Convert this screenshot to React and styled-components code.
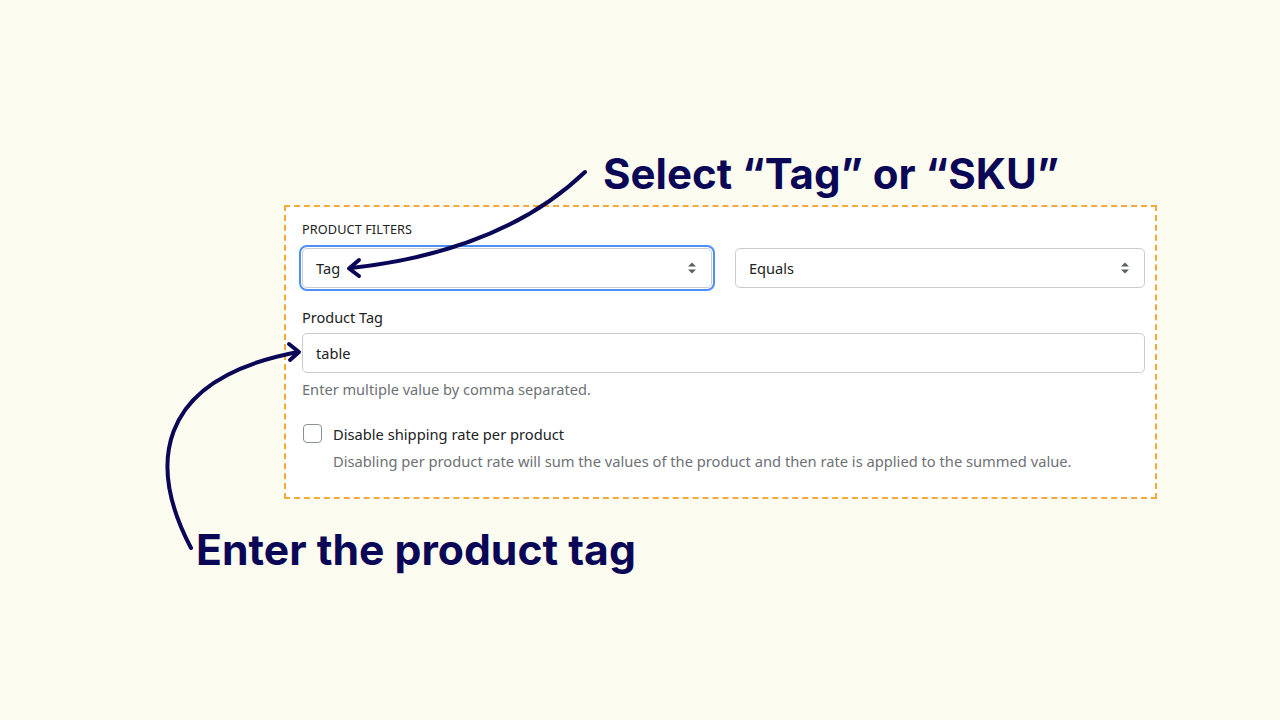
import React from "react";
import styled, { createGlobalStyle } from "styled-components";

const Global = createGlobalStyle`
  html, body { margin: 0; padding: 0; background: #fcfbef; }
  body { font-family: "Noto Sans", "Open Sans", sans-serif; }
  * { box-sizing: border-box; }
`;

const NAVY = "#0b0757";

const Stage = styled.div`
  position: relative;
  width: 1280px;
  height: 720px;
  overflow: hidden;
  background: #fcfbef;
  display: flex;
  flex-direction: column;
  align-items: flex-start;
`;

const Callout = styled.div`
  font-family: Inter, "Open Sans", sans-serif;
  font-weight: 700;
  font-size: ${(p) => p.$size}px;
  line-height: 48px;
  color: ${NAVY};
  white-space: nowrap;
  padding-left: ${(p) => p.$left}px;
  margin-top: ${(p) => p.$top}px;
`;

const Panel = styled.section`
  margin-top: 7px;
  margin-left: 284px;
  width: 873px;
  background: #fff;
  border: 2px dashed #f5a93c;
  padding: 12px 10px 26px 16px;
  display: flex;
  flex-direction: column;
`;

const SectionTitle = styled.div`
  font-size: 12.7px;
  line-height: 20px;
  text-transform: uppercase;
  color: #202223;
  letter-spacing: 0.1px;
`;

const SelectRow = styled.div`
  display: grid;
  grid-template-columns: 1fr 1fr;
  gap: 23px;
  margin-top: 9px;
`;

const SelectBox = styled.div`
  height: 40px;
  border: 1px solid #c9cccf;
  border-radius: 5px;
  background: #fff;
  display: flex;
  align-items: center;
  justify-content: space-between;
  padding: 0 14px 0 13px;
  font-size: 14.6px;
  color: #202223;
  outline: ${(p) => (p.$focused ? "2px solid #4d8ff5" : "none")};
  outline-offset: 1px;
`;

const Chevron = styled.svg`
  width: 10px;
  height: 14px;
  flex: none;
`;

const FieldLabel = styled.div`
  margin-top: 19px;
  font-size: 14.5px;
  line-height: 20px;
  color: #202223;
`;

const TextInput = styled.div`
  margin-top: 6px;
  height: 40px;
  border: 1px solid #c9cccf;
  border-radius: 5px;
  display: flex;
  align-items: center;
  padding: 0 13px;
  font-size: 14.6px;
  color: #202223;
`;

const Help = styled.div`
  margin-top: 6px;
  font-size: 14.6px;
  line-height: 20px;
  color: #6d7175;
`;

const CheckRow = styled.div`
  margin-top: 25px;
  display: flex;
  gap: 11px;
  align-items: flex-start;
`;

const Box = styled.span`
  width: 19px;
  height: 19px;
  margin-left: 1px;
  border: 1.5px solid #8c9196;
  border-radius: 4px;
  flex: none;
  background: #fff;
`;

const CheckText = styled.div`
  display: flex;
  flex-direction: column;
  gap: 7px;
`;

const CheckLabel = styled.div`
  font-size: 14.7px;
  line-height: 20px;
  color: #202223;
`;

const CheckDesc = styled.div`
  font-size: 14.7px;
  line-height: 20px;
  color: #6d7175;
`;

const Overlay = styled.svg`
  position: absolute;
  left: 0;
  top: 0;
  width: 1280px;
  height: 720px;
  pointer-events: none;
`;

const Updown = () => (
  <Chevron viewBox="0 0 10 14">
    <path d="M1 5.5 L5 1.5 L9 5.5 Z" fill="#5c5f62" />
    <path d="M1 8.5 L5 12.5 L9 8.5 Z" fill="#5c5f62" />
  </Chevron>
);

export default function App() {
  return (
    <>
      <Global />
      <Stage>
        <Callout $left={603} $top={150} $size={42}>Select “Tag” or “SKU”</Callout>
        <Panel>
          <SectionTitle>Product filters</SectionTitle>
          <SelectRow>
            <SelectBox $focused>
              <span>Tag</span>
              <Updown />
            </SelectBox>
            <SelectBox>
              <span>Equals</span>
              <Updown />
            </SelectBox>
          </SelectRow>
          <FieldLabel>Product Tag</FieldLabel>
          <TextInput>table</TextInput>
          <Help>Enter multiple value by comma separated.</Help>
          <CheckRow>
            <Box />
            <CheckText>
              <CheckLabel>Disable shipping rate per product</CheckLabel>
              <CheckDesc>
                Disabling per product rate will sum the values of the product and then rate is applied to the summed value.
              </CheckDesc>
            </CheckText>
          </CheckRow>
        </Panel>
        <Callout $left={196} $top={27} $size={42.7}>Enter the product tag</Callout>
        <Overlay viewBox="0 0 1280 720">
          <g fill="none" stroke={NAVY} strokeWidth="4" strokeLinecap="round" strokeLinejoin="round">
            <path d="M585 172 C 540 215, 470 255, 351 268" />
            <path d="M359 260 L349 268.5 L359 276" />
            <path d="M191 548 C 150 470, 150 380, 298 352" />
            <path d="M289 344 L299 352 L290 360" />
          </g>
        </Overlay>
      </Stage>
    </>
  );
}
